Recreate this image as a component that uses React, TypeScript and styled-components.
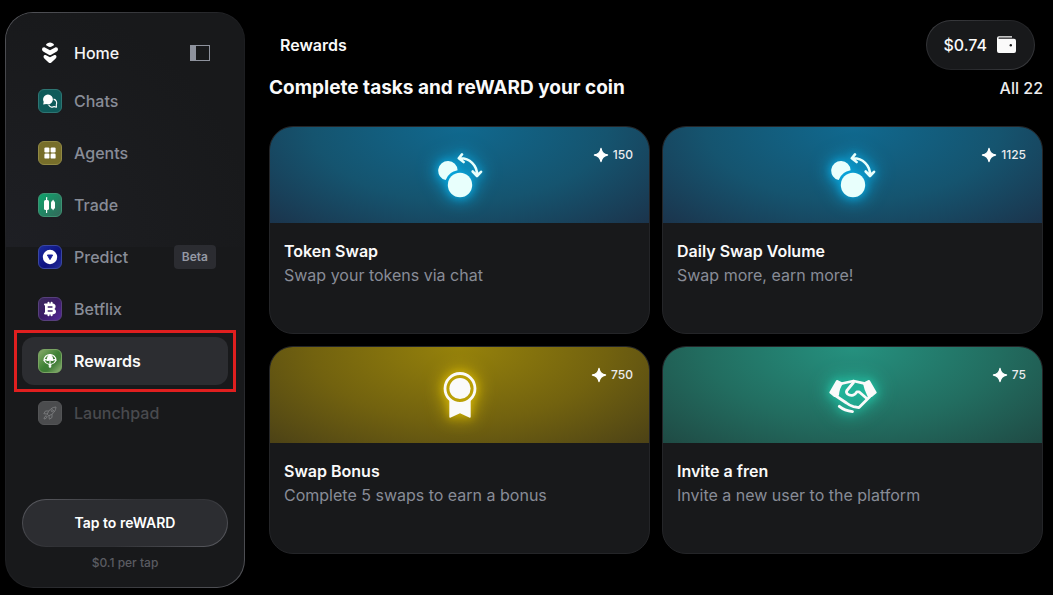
import React from "react";
import styled, { createGlobalStyle, css } from "styled-components";

const GlobalStyle = createGlobalStyle`
  *, *::before, *::after { box-sizing: border-box; }
  body {
    margin: 0;
    background: #000;
    color: #fafafa;
    font-family: Inter, "Liberation Sans", sans-serif;
    font-size: 16px;
    line-height: 24px;
  }
  button { font: inherit; color: inherit; cursor: pointer; }
  svg { display: block; flex: none; }
`;

const Page = styled.div`
  display: grid;
  grid-template-columns: 240px minmax(0, 1fr);
  gap: 24px;
  min-height: 100vh;
  padding: 12px 10px 7px 5px;
`;

const Sidebar = styled.aside`
  display: flex;
  flex-direction: column;
  padding: 16px;
  border: 1px solid transparent;
  border-radius: 28px;
  background:
    radial-gradient(ellipse at 0% 100%, #1e1f24 0%, #1b1c1f 40%, #18191b 75%) padding-box top / 100% 234px no-repeat,
    linear-gradient(#18191b, #18191b) padding-box,
    linear-gradient(135deg, #55565b 0%, #1d1e21 30%, #1d1e21 70%, #55565b 100%) border-box;
`;

const HomeRow = styled.div`
  display: flex;
  align-items: center;
  justify-content: space-between;
  height: 48px;
  padding: 0 16px;
`;

const HomeLink = styled.a`
  display: flex;
  align-items: center;
  gap: 12px;
  color: #f4f4f5;
  font-weight: 500;
  text-decoration: none;
`;

const ToggleButton = styled.button`
  display: grid;
  place-items: center;
  width: 24px;
  height: 24px;
  padding: 0;
  border: 0;
  background: none;
  color: #8e929d;
`;

const NavList = styled.ul`
  display: flex;
  flex-direction: column;
  gap: 4px;
  margin: 0;
  padding: 0;
  list-style: none;
`;

const NavItem = styled.li`
  position: relative;
`;

const Marker = styled.span`
  position: absolute;
  inset: -7px -8px;
  border: 3px solid #e01f1f;
  pointer-events: none;
`;

const NavLink = styled.a<{ $active?: boolean; $disabled?: boolean }>`
  display: flex;
  align-items: center;
  gap: 12px;
  height: 48px;
  padding: 0 12px 0 16px;
  border-radius: 12px;
  color: #888c97;
  font-weight: 500;
  text-decoration: none;
  ${(p) =>
    p.$active &&
    css`
      background: #2c2d31;
      color: #fafafa;
      font-weight: 600;
    `}
  ${(p) =>
    p.$disabled &&
    css`
      color: #494a4e;
    `}
`;

const Tile = styled.span<{ $bg: string; $edge: string }>`
  display: grid;
  place-items: center;
  width: 24px;
  height: 24px;
  border: 1px solid ${(p) => p.$edge};
  border-radius: 6px;
  background: ${(p) => p.$bg};
`;

const Badge = styled.span`
  margin-left: auto;
  padding: 4px 8px;
  border-radius: 4px;
  background: #2b2c31;
  color: #9599a4;
  font-size: 12px;
  line-height: 16px;
  font-weight: 600;
`;

const SidebarFooter = styled.div`
  display: flex;
  flex-direction: column;
  gap: 8px;
  margin-top: auto;
`;

const TapButton = styled.button`
  height: 48px;
  border: 1px solid transparent;
  border-radius: 24px;
  background:
    linear-gradient(#2c2d31, #2c2d31) padding-box,
    linear-gradient(150deg, #5c5d63 0%, #303135 40%, #303135 60%, #5c5d63 100%) border-box;
  color: #fff;
  font-size: 14px;
  font-weight: 600;
`;

const TapNote = styled.p`
  margin: 0;
  color: #5b5c62;
  font-size: 12px;
  line-height: 16px;
  font-weight: 500;
  text-align: center;
`;

const Main = styled.main`
  padding-top: 8px;
`;

const TopBar = styled.header`
  display: flex;
  align-items: center;
  justify-content: space-between;
  padding: 0 8px 0 11px;
`;

const PageName = styled.h1`
  margin: 0;
  font-size: 16px;
  font-weight: 600;
`;

const WalletButton = styled.button`
  display: flex;
  align-items: center;
  gap: 9px;
  padding: 12px 18px 12px 16px;
  border: 1px solid transparent;
  border-radius: 25px;
  background:
    linear-gradient(#18191b, #18191b) padding-box,
    linear-gradient(150deg, #3f4044 0%, #242528 45%, #242528 60%, #3f4044 100%) border-box;
  font-weight: 500;
`;

const SectionHead = styled.div`
  display: flex;
  align-items: center;
  justify-content: space-between;
  margin: 4px 0 24px;
  line-height: 28px;
`;

const SectionTitle = styled.h2`
  margin: 0;
  font-size: 19px;
  font-weight: 700;
`;

const Count = styled.span`
  color: #ececee;
  font-weight: 500;
`;

const CardGrid = styled.section`
  display: grid;
  grid-template-columns: repeat(2, minmax(0, 1fr));
  gap: 12px;
`;

const Card = styled.article`
  overflow: hidden;
  border: 1px solid #242528;
  border-radius: 24px;
  background: #18191b;
`;

const Banner = styled.div<{ $from: string; $mid: string; $to: string }>`
  position: relative;
  display: grid;
  place-items: center;
  height: 96px;
  background: radial-gradient(ellipse farthest-corner at 50% 0%, ${(p) => p.$from} 0%, ${(p) => p.$mid} 55%, ${(p) => p.$to} 100%);
`;

const Glow = styled.div<{ $color: string }>`
  filter: drop-shadow(0 0 4px ${(p) => p.$color}) drop-shadow(0 0 9px ${(p) => p.$color});
`;

const Points = styled.span`
  position: absolute;
  top: 20px;
  right: 16px;
  display: flex;
  align-items: center;
  gap: 4px;
  color: #ececee;
  font-size: 12px;
  line-height: 16px;
  font-weight: 500;
`;

const CardBody = styled.div`
  min-height: 110px;
  padding: 16px 14px;
`;

const CardTitle = styled.h3`
  margin: 0;
  font-size: 16px;
  font-weight: 600;
`;

const CardText = styled.p`
  margin: 0;
  color: #888c97;
`;

const HomeLogo = () => (
  <svg width="24" height="24" viewBox="0 0 24 24" fill="#fff" aria-hidden="true">
    <path d="M12 1.6C13.4 1.6 16 3 16 3.8S13.4 5.9 12 5.9 8 4.6 8 3.8 10.6 1.6 12 1.6Z" />
    <path d="M4 8.2Q4 6 6.4 6.2L12 9.2L17.6 6.2Q20 6 20 8.200Q20 9.700 18.800 10.400L13.200 13.800Q12 14.500 10.800 13.800L5.200 10.400Q4 9.700 4 8.200Z" />
    <path d="M5.500 15.400Q5.700 13.800 7.600 14L12 16.300L16.400 14Q18.300 13.800 18.500 15.400Q18.500 16.800 17.400 17.700L13.400 21.400Q12 22.700 10.600 21.400L6.600 17.700Q5.500 16.800 5.500 15.400Z" />
  </svg>
);

const PanelIcon = () => (
  <svg width="20" height="16" viewBox="0 0 20 16" aria-hidden="true">
    <rect x=".5" y=".5" width="19" height="15" fill="none" stroke="currentColor" />
    <rect width="6" height="16" fill="currentColor" />
  </svg>
);

const ChatIcon = () => (
  <svg width="16" height="16" viewBox="0 0 16 16" aria-hidden="true">
    <path d="M11.6 6.1A4 4 0 0 1 14.3 11.7L14.4 14.2L12.2 13.6A4 4 0 0 1 6.6 11.8" fill="none" stroke="#fff" strokeWidth="1.1" strokeLinejoin="round" />
    <path d="M6 1.5A4.900 4.900 0 1 1 4.300 11L1.200 11.600L1.700 8.800A4.900 4.900 0 0 1 6 1.500Z" fill="#fff" />
  </svg>
);

const GridIcon = () => (
  <svg width="16" height="16" viewBox="0 0 16 16" fill="#fff" aria-hidden="true">
    <rect x="2.400" y="2.400" width="5" height="5" rx="1.200" />
    <rect x="8.600" y="2.400" width="5" height="5" rx="1.200" />
    <rect x="2.400" y="8.600" width="5" height="5" rx="1.200" />
    <rect x="8.600" y="8.600" width="5" height="5" rx="1.200" />
  </svg>
);

const CandlesIcon = () => (
  <svg width="16" height="16" viewBox="0 0 16 16" fill="#fff" aria-hidden="true">
    <rect x="2" y="3" width="5" height="10" rx="1.600" />
    <rect x="4" y="0" width="1.200" height="16" rx=".6" />
    <rect x="9" y="4" width="4" height="8" rx="1.600" />
    <rect x="10.500" y="2.800" width="1.200" height="10.400" rx=".6" />
  </svg>
);

const PredictIcon = () => (
  <svg width="16" height="16" viewBox="0 0 16 16" aria-hidden="true">
    <circle cx="8" cy="8" r="7.200" fill="#fff" />
    <path d="M5.400 6H10.600L8 10.600Z" fill="#18209c" stroke="#18209c" strokeLinejoin="round" />
  </svg>
);

const CoinIcon = () => (
  <svg width="16" height="16" viewBox="0 0 16 16" aria-hidden="true">
    <path
      d="M5.500 1.600Q5.500 .8 6.500 .8T7.500 1.600V2.400H8.600V1.600Q8.600 .8 9.600 .8T10.600 1.600V2.600Q13.600 3 13.600 5.400Q13.600 7 12.400 7.900Q14 8.800 14 10.600Q14 13.200 10.600 13.500V14.400Q10.600 15.200 9.600 15.200T8.600 14.400V13.600H7.500V14.400Q7.500 15.200 6.500 15.200T5.500 14.400V13.600H3Q2 13.600 2 12.500T3 11.400V4.600Q2 4.600 2 3.500T3 2.400H5.500Z"
      fill="#fff"
    />
    <path d="M6.200 6H10M6.200 10H10.200" stroke="#40216e" strokeWidth="1.300" strokeLinecap="round" />
  </svg>
);

const ParachuteIcon = () => (
  <svg width="16" height="16" viewBox="0 0 16 16" fill="none" stroke="#fff" strokeWidth="1.100" strokeLinejoin="round" aria-hidden="true">
    <path d="M2 7.500A6 6 0 0 1 14 7.500Q12.200 5.800 10.500 7.500Q8 5.800 5.500 7.500Q3.800 5.800 2 7.500Z" />
    <path d="M5.500 7.500Q5.300 3 8 1.600Q10.700 3 10.500 7.500Q8 6 5.500 7.500Z" fill="#fff" />
    <path d="M2 7.500Q3.500 10.500 7.300 11.500M14 7.500Q12.500 10.500 8.700 11.500M8 7V12" />
    <path d="M7.200 11.500H8.800V14.200H7.200Z" fill="#fff" strokeWidth=".8" />
  </svg>
);

const RocketIcon = () => (
  <svg width="16" height="16" viewBox="0 0 16 16" fill="none" stroke="#77787a" strokeWidth="1" strokeLinejoin="round" strokeLinecap="round" aria-hidden="true">
    <path d="M5.300 8.800Q8 2.200 14 2Q13.800 8 7.200 10.700Z" />
    <path d="M6.500 6H3.500L1.800 8.700L5 9M10 9.500V12.500L7.300 14.200L7 11" />
    <path d="M3.800 11Q2 11.500 2 14Q4.500 14 5 12.200M4.200 10.800L5.200 11.800" />
    <circle cx="10.300" cy="5.700" r="1.100" />
  </svg>
);

const WalletIcon = () => (
  <svg width="20" height="20" viewBox="0 0 20 20" fill="#fafafa" aria-hidden="true">
    <path d="M3 1.200H16V2.500H3.200Q2.300 2.500 2.300 3.100T3.200 3.700H18Q20 3.700 20 5.700V16Q20 18 18 18H3Q1 18 1 16V3.200Q1 1.200 3 1.200Z" />
    <circle cx="14.800" cy="10.200" r="1.200" fill="#18191b" />
  </svg>
);

const SparkIcon = () => (
  <svg width="16" height="16" viewBox="0 0 16 16" aria-hidden="true">
    <path d="M8 1.500Q8.900 7.100 14.500 8Q8.900 8.900 8 14.500Q7.100 8.900 1.500 8Q7.100 7.100 8 1.500Z" fill="#fff" stroke="#fff" strokeWidth="1.400" strokeLinejoin="round" />
  </svg>
);

const SwapIcon = () => (
  <svg width="48" height="48" viewBox="0 0 48 48" fill="none" aria-hidden="true">
    <path d="M9.700 29.100A9.700 9.700 0 1 1 21.600 19.200A15 15 0 0 0 9.700 29.100Z" fill="#e8fffc" />
    <circle cx="24" cy="34" r="12.200" fill="#e8fffc" />
    <path d="M23.300 7.300C33.500 6.800 41.300 14 41.200 24.800M26 3.400L22.800 7.300L27.600 11M36.700 20.500L41 25L45 20.800" stroke="#e8fffc" strokeWidth="2.600" strokeLinecap="round" strokeLinejoin="round" />
  </svg>
);

const MedalIcon = () => (
  <svg width="48" height="48" viewBox="0 0 48 48" aria-hidden="true">
    <path d="M13.300 27V45.700Q13.300 47.300 14.800 46.600L24 42.300L33.200 46.600Q34.700 47.300 34.700 45.700V27Z" fill="#fafafa" />
    <circle cx="24" cy="17.500" r="15" fill="#bba006" stroke="#fafafa" strokeWidth="2.800" />
    <circle cx="24" cy="17.500" r="10.600" fill="#fafafa" />
  </svg>
);

const HandshakeIcon = () => (
  <svg width="48" height="48" viewBox="0 0 48 48" fill="none" stroke="#fafafa" strokeWidth="2.800" strokeLinecap="round" strokeLinejoin="round" aria-hidden="true">
    <path d="M8 10L13 12.400Q9.500 17 9 24L5.500 25L1.300 21.500Z" fill="#fafafa" strokeWidth="2" />
    <path d="M40 10L35 12.400L36.500 18L39.500 25L42.500 25L46.700 21.500Z" fill="#fafafa" strokeWidth="2" />
    <path d="M13 12.500L24.500 10L35 12.400" />
    <path d="M24.500 11.500L17.900 19.500Q16.800 21.600 18.500 23Q21 25 24 24.200Q26.500 23.200 27.800 20.800H30L37.500 27.300" />
    <path d="M7 25L17.500 32Q21 34.800 24.500 35.600L30 36.600L41 25.500" />
    <path d="M10.300 35.300Q15.500 39.600 23.500 40.600" />
  </svg>
);

const navItems = [
  { label: "Chats", icon: <ChatIcon />, bg: "#0f5b5a", edge: "#2e7573" },
  { label: "Agents", icon: <GridIcon />, bg: "#776e2a", edge: "#918944" },
  { label: "Trade", icon: <CandlesIcon />, bg: "linear-gradient(135deg, #0ea46d, #34685a)", edge: "#3e9273" },
  { label: "Predict", icon: <PredictIcon />, bg: "linear-gradient(135deg, #1b2c9e, #0d117f 60%, #26309a)", edge: "#3a479f", badge: "Beta" },
  { label: "Betflix", icon: <CoinIcon />, bg: "linear-gradient(135deg, #3a2b5c, #3b1b66 50%, #54289a)", edge: "#57407c" },
  { label: "Rewards", icon: <ParachuteIcon />, bg: "linear-gradient(135deg, #87aa69, #3d8134 50%, #3f7c36 65%, #91b478)", edge: "#79a462", active: true },
  { label: "Launchpad", icon: <RocketIcon />, bg: "#4b4c4e", edge: "#535456", disabled: true },
];

const blue = { from: "#10698f", mid: "#15546f", to: "#1b344c", glow: "#08a9e0" };
const gold = { from: "#96820b", mid: "#72620f", to: "#4c4216", glow: "#cdb004" };
const teal = { from: "#25917f", mid: "#226d60", to: "#1f4a44", glow: "#22c7a9" };

const rewards = [
  { title: "Token Swap", text: "Swap your tokens via chat", points: 150, icon: <SwapIcon />, tone: blue },
  { title: "Daily Swap Volume", text: "Swap more, earn more!", points: 1125, icon: <SwapIcon />, tone: blue },
  { title: "Swap Bonus", text: "Complete 5 swaps to earn a bonus", points: 750, icon: <MedalIcon />, tone: gold },
  { title: "Invite a fren", text: "Invite a new user to the platform", points: 75, icon: <HandshakeIcon />, tone: teal },
];

export default function App() {
  return (
    <>
      <GlobalStyle />
      <Page>
        <Sidebar>
          <HomeRow>
            <HomeLink href="#home">
              <HomeLogo />
              Home
            </HomeLink>
            <ToggleButton type="button" aria-label="Toggle sidebar">
              <PanelIcon />
            </ToggleButton>
          </HomeRow>
          <nav>
            <NavList>
              {navItems.map((item) => (
                <NavItem key={item.label}>
                  <NavLink
                    href={`#${item.label.toLowerCase()}`}
                    $active={item.active}
                    $disabled={item.disabled}
                    aria-current={item.active ? "page" : undefined}
                    aria-disabled={item.disabled}
                  >
                    <Tile $bg={item.bg} $edge={item.edge}>
                      {item.icon}
                    </Tile>
                    {item.label}
                    {item.badge && <Badge>{item.badge}</Badge>}
                  </NavLink>
                  {item.active && <Marker />}
                </NavItem>
              ))}
            </NavList>
          </nav>
          <SidebarFooter>
            <TapButton type="button">Tap to reWARD</TapButton>
            <TapNote>$0.1 per tap</TapNote>
          </SidebarFooter>
        </Sidebar>
        <Main>
          <TopBar>
            <PageName>Rewards</PageName>
            <WalletButton type="button">
              $0.74
              <WalletIcon />
            </WalletButton>
          </TopBar>
          <SectionHead>
            <SectionTitle>Complete tasks and reWARD your coin</SectionTitle>
            <Count>All 22</Count>
          </SectionHead>
          <CardGrid>
            {rewards.map((r) => (
              <Card key={r.title}>
                <Banner $from={r.tone.from} $mid={r.tone.mid} $to={r.tone.to}>
                  <Glow $color={r.tone.glow}>{r.icon}</Glow>
                  <Points>
                    <SparkIcon />
                    {r.points}
                  </Points>
                </Banner>
                <CardBody>
                  <CardTitle>{r.title}</CardTitle>
                  <CardText>{r.text}</CardText>
                </CardBody>
              </Card>
            ))}
          </CardGrid>
        </Main>
      </Page>
    </>
  );
}
